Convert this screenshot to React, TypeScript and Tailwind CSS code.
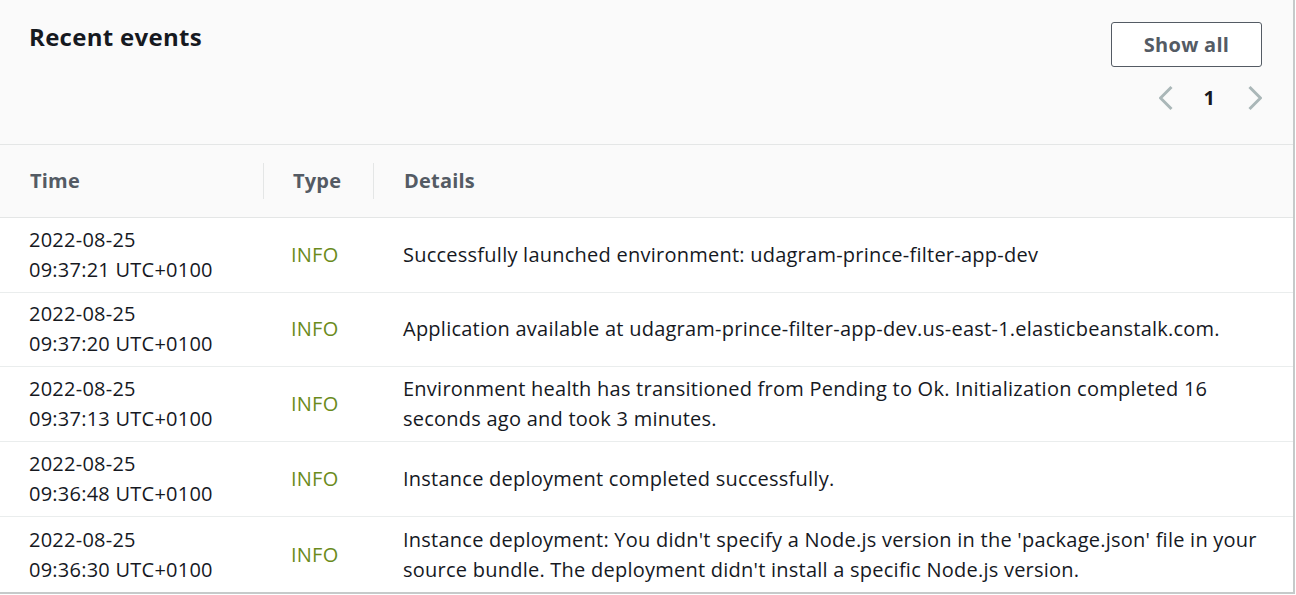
interface EventRow {
  date: string;
  time: string;
  type: string;
  details: string;
}

const events: EventRow[] = [
  {
    date: '2022-08-25',
    time: '09:37:21 UTC+0100',
    type: 'INFO',
    details: 'Successfully launched environment: udagram-prince-filter-app-dev',
  },
  {
    date: '2022-08-25',
    time: '09:37:20 UTC+0100',
    type: 'INFO',
    details:
      'Application available at udagram-prince-filter-app-dev.us-east-1.elasticbeanstalk.com.',
  },
  {
    date: '2022-08-25',
    time: '09:37:13 UTC+0100',
    type: 'INFO',
    details:
      'Environment health has transitioned from Pending to Ok. Initialization completed 16 seconds ago and took 3 minutes.',
  },
  {
    date: '2022-08-25',
    time: '09:36:48 UTC+0100',
    type: 'INFO',
    details: 'Instance deployment completed successfully.',
  },
  {
    date: '2022-08-25',
    time: '09:36:30 UTC+0100',
    type: 'INFO',
    details:
      "Instance deployment: You didn't specify a Node.js version in the 'package.json' file in your source bundle. The deployment didn't install a specific Node.js version.",
  },
];

function Chevron({ dir }: { dir: 'left' | 'right' }) {
  return (
    <svg width="14" height="26" viewBox="0 0 14 26" fill="none" className="text-[#aab7b8]">
      <polyline
        points={dir === 'left' ? '12.5,2 1.5,13 12.5,24' : '1.5,2 12.5,13 1.5,24'}
        stroke="currentColor"
        strokeWidth="3"
      />
    </svg>
  );
}

function App() {
  return (
    <div className="w-[1296px] h-[595px] bg-white overflow-hidden font-['Open_Sans',Arial,sans-serif] text-[#16191f]">
      <div className="w-[1295px] h-[594px] bg-white border-r-2 border-b-2 border-[#c6caca] flex flex-col">
        {/* Header */}
        <div className="h-[145px] bg-[#fafafa] border-b border-[#e4e6e6] flex justify-between pl-[29px] pr-[31px]">
          <h2 className="mt-[21px] text-[24px] leading-[32px] font-bold tracking-[0.3px]">Recent events</h2>
          <div className="flex flex-col items-end pt-[22px]">
            <button className="w-[151px] h-[45px] border border-[#545b64] rounded-[3px] bg-white text-[#545b64] text-[20px] font-bold tracking-[0.3px]">
              Show all
            </button>
            <div className="flex items-center mt-[17px] h-[28px]">
              <Chevron dir="left" />
              <span className="ml-[31px] mr-[33px] text-[20px] font-bold">1</span>
              <Chevron dir="right" />
            </div>
          </div>
        </div>

        {/* Table head */}
        <div className="h-[73px] bg-[#fafafa] border-b border-[#e4e6e6] flex items-center text-[20px] font-bold text-[#545b64] tracking-[0.2px]">
          <div className="w-[263px] pl-[30px]">Time</div>
          <div className="w-[110px] h-[36px] border-l border-[#e4e6e6] pl-[29px] flex items-center">Type</div>
          <div className="flex-1 h-[36px] border-l border-[#e4e6e6] pl-[30px] flex items-center">Details</div>
        </div>

        {/* Rows */}
        {events.map((ev, i) => (
          <div
            key={i}
            className={`h-[75px] flex items-center text-[20px] leading-[30px] tracking-[0.24px] ${
              i < events.length - 1 ? 'border-b border-[#eaeded]' : ''
            }`}
          >
            <div className="w-[263px] pl-[29px]">
              <div>{ev.date}</div>
              <div>{ev.time}</div>
            </div>
            <div className="w-[110px] pl-[28px] text-[#6b8b1c]">{ev.type}</div>
            <div className="flex-1 pl-[30px] pr-[30px]">{ev.details}</div>
          </div>
        ))}
      </div>
    </div>
  );
}

export default App;
